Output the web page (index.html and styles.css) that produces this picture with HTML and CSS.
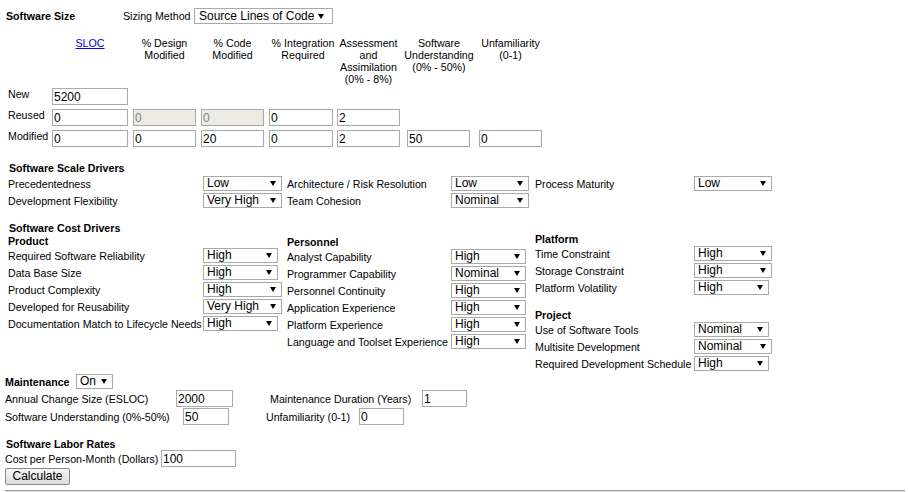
FILE: index.html
```html
<!DOCTYPE html>
<html lang="en">
<head>
<meta charset="utf-8">
<title>COCOMO II</title>
<link rel="stylesheet" href="styles.css">
</head>
<body>
<div class="size-top">
  <b class="size-title">Software Size</b>
  <span class="method-lbl">Sizing Method</span>
  <div class="sel sel-method"><span>Source Lines of Code</span><svg width="6" height="5" viewBox="0 0 6 5"><path d="M0 0H6L3 5Z"/></svg></div>
</div>

<div class="size-grid">
  <div class="corner"></div>
  <div class="hd w76"><div><a href="#">SLOC</a></div></div>
  <div class="hd w63"><div>% Design<br>Modified</div></div>
  <div class="hd w63"><div>% Code<br>Modified</div></div>
  <div class="hd w68"><div>% Integration<br>Required</div></div>
  <div class="hd w63"><div>Assessment<br>and<br>Assimilation<br>(0% - 8%)</div></div>
  <div class="hd w64"><div>Software<br>Understanding<br>(0% - 50%)</div></div>
  <div class="hd w63"><div>Unfamiliarity<br>(0-1)</div></div>

  <div class="rowlbl">New</div>
  <input class="box w76" value="5200">

  <div class="rowlbl">Reused</div>
  <input class="box w76" value="0">
  <input class="box w63" value="0" disabled>
  <input class="box w63" value="0" disabled>
  <input class="box w64" value="0">
  <input class="box w63" value="2">

  <div class="rowlbl">Modified</div>
  <input class="box w76" value="0">
  <input class="box w63" value="0">
  <input class="box w63" value="20">
  <input class="box w64" value="0">
  <input class="box w63" value="2">
  <input class="box w63" value="50">
  <input class="box w63" value="0">
</div>

<div class="sec-title">Software Scale Drivers</div>
<div class="scale-grid">
  <span>Precedentedness</span>
  <div class="sel s79"><span>Low</span><svg width="6" height="5" viewBox="0 0 6 5"><path d="M0 0H6L3 5Z"/></svg></div>
  <span>Architecture / Risk Resolution</span>
  <div class="sel s78"><span>Low</span><svg width="6" height="5" viewBox="0 0 6 5"><path d="M0 0H6L3 5Z"/></svg></div>
  <span>Process Maturity</span>
  <div class="sel s78"><span>Low</span><svg width="6" height="5" viewBox="0 0 6 5"><path d="M0 0H6L3 5Z"/></svg></div>

  <span>Development Flexibility</span>
  <div class="sel s79"><span>Very High</span><svg width="6" height="5" viewBox="0 0 6 5"><path d="M0 0H6L3 5Z"/></svg></div>
  <span>Team Cohesion</span>
  <div class="sel s78"><span>Nominal</span><svg width="6" height="5" viewBox="0 0 6 5"><path d="M0 0H6L3 5Z"/></svg></div>
</div>

<div class="sec-title cost-title">Software Cost Drivers</div>
<div class="cost-cols">
  <div class="col col-product">
    <div class="sub">Product</div>
    <div class="drv">
      <span>Required Software Reliability</span>
      <div class="sel s75"><span>High</span><svg width="6" height="5" viewBox="0 0 6 5"><path d="M0 0H6L3 5Z"/></svg></div>
      <span>Data Base Size</span>
      <div class="sel s75"><span>High</span><svg width="6" height="5" viewBox="0 0 6 5"><path d="M0 0H6L3 5Z"/></svg></div>
      <span>Product Complexity</span>
      <div class="sel s79"><span>High</span><svg width="6" height="5" viewBox="0 0 6 5"><path d="M0 0H6L3 5Z"/></svg></div>
      <span>Developed for Reusability</span>
      <div class="sel s79"><span>Very High</span><svg width="6" height="5" viewBox="0 0 6 5"><path d="M0 0H6L3 5Z"/></svg></div>
      <span>Documentation Match to Lifecycle Needs</span>
      <div class="sel s75"><span>High</span><svg width="6" height="5" viewBox="0 0 6 5"><path d="M0 0H6L3 5Z"/></svg></div>
    </div>
  </div>

  <div class="col col-personnel">
    <div class="sub">Personnel</div>
    <div class="drv">
      <span>Analyst Capability</span>
      <div class="sel s75"><span>High</span><svg width="6" height="5" viewBox="0 0 6 5"><path d="M0 0H6L3 5Z"/></svg></div>
      <span>Programmer Capability</span>
      <div class="sel s75"><span>Nominal</span><svg width="6" height="5" viewBox="0 0 6 5"><path d="M0 0H6L3 5Z"/></svg></div>
      <span>Personnel Continuity</span>
      <div class="sel s75"><span>High</span><svg width="6" height="5" viewBox="0 0 6 5"><path d="M0 0H6L3 5Z"/></svg></div>
      <span>Application Experience</span>
      <div class="sel s75"><span>High</span><svg width="6" height="5" viewBox="0 0 6 5"><path d="M0 0H6L3 5Z"/></svg></div>
      <span>Platform Experience</span>
      <div class="sel s75"><span>High</span><svg width="6" height="5" viewBox="0 0 6 5"><path d="M0 0H6L3 5Z"/></svg></div>
      <span>Language and Toolset Experience</span>
      <div class="sel s75"><span>High</span><svg width="6" height="5" viewBox="0 0 6 5"><path d="M0 0H6L3 5Z"/></svg></div>
    </div>
  </div>

  <div class="col col-platform">
    <div class="sub">Platform</div>
    <div class="drv">
      <span>Time Constraint</span>
      <div class="sel s78"><span>High</span><svg width="6" height="5" viewBox="0 0 6 5"><path d="M0 0H6L3 5Z"/></svg></div>
      <span>Storage Constraint</span>
      <div class="sel s78"><span>High</span><svg width="6" height="5" viewBox="0 0 6 5"><path d="M0 0H6L3 5Z"/></svg></div>
      <span>Platform Volatility</span>
      <div class="sel s75"><span>High</span><svg width="6" height="5" viewBox="0 0 6 5"><path d="M0 0H6L3 5Z"/></svg></div>
    </div>
    <div class="sub project">Project</div>
    <div class="drv">
      <span>Use of Software Tools</span>
      <div class="sel s75"><span>Nominal</span><svg width="6" height="5" viewBox="0 0 6 5"><path d="M0 0H6L3 5Z"/></svg></div>
      <span>Multisite Development</span>
      <div class="sel s78"><span>Nominal</span><svg width="6" height="5" viewBox="0 0 6 5"><path d="M0 0H6L3 5Z"/></svg></div>
      <span>Required Development Schedule</span>
      <div class="sel s75"><span>High</span><svg width="6" height="5" viewBox="0 0 6 5"><path d="M0 0H6L3 5Z"/></svg></div>
    </div>
  </div>
</div>

<div class="maint-head">
  <b class="maint-title">Maintenance</b>
  <div class="sel s37"><span>On</span><svg width="6" height="5" viewBox="0 0 6 5"><path d="M0 0H6L3 5Z"/></svg></div>
</div>
<div class="mrow mrow1">
  <span class="ml1">Annual Change Size (ESLOC)</span>
  <input class="box w57" value="2000">
  <span class="ml2">Maintenance Duration (Years)</span>
  <input class="box w45" value="1">
</div>
<div class="mrow mrow2">
  <span class="ml1">Software Understanding (0%-50%)</span>
  <input class="box w46" value="50">
  <span class="ml2">Unfamiliarity (0-1)</span>
  <input class="box w45" value="0">
</div>

<div class="sec-title labor-title">Software Labor Rates</div>
<div class="mrow labor-row">
  <span class="ml1">Cost per Person-Month (Dollars)</span>
  <input class="box w75" value="100">
</div>
<button class="calc" type="button">Calculate</button>
<div class="rule"></div>
</body>
</html>
```

FILE: styles.css
```css
* { box-sizing: border-box; }

body {
  margin: 0;
  padding: 8px 0 0 0;
  font-family: "Liberation Sans", Arial, sans-serif;
  font-size: 8pt;
  line-height: 12px;
  color: #000;
  background: #fff;
}

a { color: #0000ee; text-decoration: underline; }

/* fake select box */
.sel {
  display: inline-flex;
  align-items: center;
  justify-content: space-between;
  height: 15px;
  border: 1px solid #a9a9a9;
  background: #fff;
  padding: 0 5px 0 3px;
  font-size: 12px;
  line-height: 13px;
  white-space: nowrap;
  color: #000;
}
.sel svg { flex: none; display: block; }
.sel svg path { fill: #000; }
.s37 { width: 37px; }
.s75 { width: 75px; }
.s78 { width: 78px; }
.s79 { width: 79px; }

/* text box */
.box {
  height: 17px;
  margin: 0;
  border: 1px solid #a9a9a9;
  padding: 0 1px;
  font-family: "Liberation Sans", Arial, sans-serif;
  font-size: 12px;
  color: #000;
  background: #fff;
  outline: none;
}
.box:disabled { background: #ebebe4; color: #808080; }
.w45 { width: 45px; }
.w46 { width: 46px; }
.w57 { width: 57px; }
.w63 { width: 63px; }
.w64 { width: 64px; }
.w68 { width: 68px; }
.w75 { width: 75px; }
.w76 { width: 76px; }

/* top row */
.size-top {
  display: flex;
  align-items: center;
  height: 16px;
  padding-left: 6px;
}
.size-title { width: 117px; }
.method-lbl { width: 71px; }
.sel-method { width: 139px; height: 16px; padding: 0 8px 0 4px; }

/* size table */
.size-grid {
  display: grid;
  grid-template-columns: 44px 81px 68px 68px 68px 70px 72px 63px;
  grid-template-rows: 47px 17px 17px 17px;
  row-gap: 4px;
  margin-top: 13px;
  padding-left: 8px;
}
.hd {
  display: flex;
  justify-content: center;
  align-self: start;
}
.hd > div {
  flex: none;
  white-space: nowrap;
  text-align: center;
}
.rowlbl { grid-column: 1; align-self: start; }

/* section titles */
.sec-title {
  font-weight: bold;
  margin: 15px 0 1px 9px;
}
.cost-title { margin: 13px 0 0 9px; }
.labor-title { margin: 13px 0 0 6px; }

/* scale drivers */
.scale-grid {
  display: grid;
  grid-template-columns: 195px 84px 164px 84px 159px 78px;
  grid-auto-rows: 17px;
  align-items: center;
  padding-left: 8px;
  white-space: nowrap;
}

/* cost drivers */
.cost-cols {
  display: flex;
  align-items: flex-start;
  margin-top: -1px;
  padding-left: 8px;
  white-space: nowrap;
}
.col-product { width: 279px; padding-top: 2px; }
.col-personnel { width: 248px; padding-top: 3px; }
.col-platform { padding-top: 0; }
.sub { font-weight: bold; }
.sub.project { margin-top: 13px; }
.drv {
  display: grid;
  grid-auto-rows: 17px;
  align-items: center;
  justify-items: start;
}
.col-product .drv { grid-template-columns: 195px auto; }
.col-personnel .drv { grid-template-columns: 164px auto; }
.col-platform .drv { grid-template-columns: 159px auto; }

/* maintenance */
.maint-head {
  display: flex;
  align-items: center;
  height: 15px;
  margin-top: 2px;
  padding-left: 5px;
}
.maint-title { width: 71px; }
.mrow {
  display: flex;
  align-items: center;
  height: 17px;
  margin-top: 1px;
  padding-left: 5px;
  white-space: nowrap;
}
.mrow1 .ml1 { width: 171px; }
.mrow1 .ml2 { width: 152px; margin-left: 37px; }
.mrow2 .ml1 { width: 178px; }
.mrow2 .ml2 { width: 93px; margin-left: 37px; }
.labor-row { margin-top: 0; }
.labor-row .ml1 { width: 156px; }

.calc {
  display: block;
  margin: 1px 0 0 5px;
  width: 65px;
  height: 17px;
  padding: 0;
  border: 1px solid #8a8a8a;
  border-radius: 2px;
  background: linear-gradient(#f6f6f6, #dcdcdc);
  font-family: "Liberation Sans", Arial, sans-serif;
  font-size: 12px;
  line-height: 15px;
  color: #000;
}

.rule {
  margin: 5px 4px 0 5px;
  border-top: 1px solid #a0a0a0;
  border-bottom: 1px solid #dcdcdc;
}
```
